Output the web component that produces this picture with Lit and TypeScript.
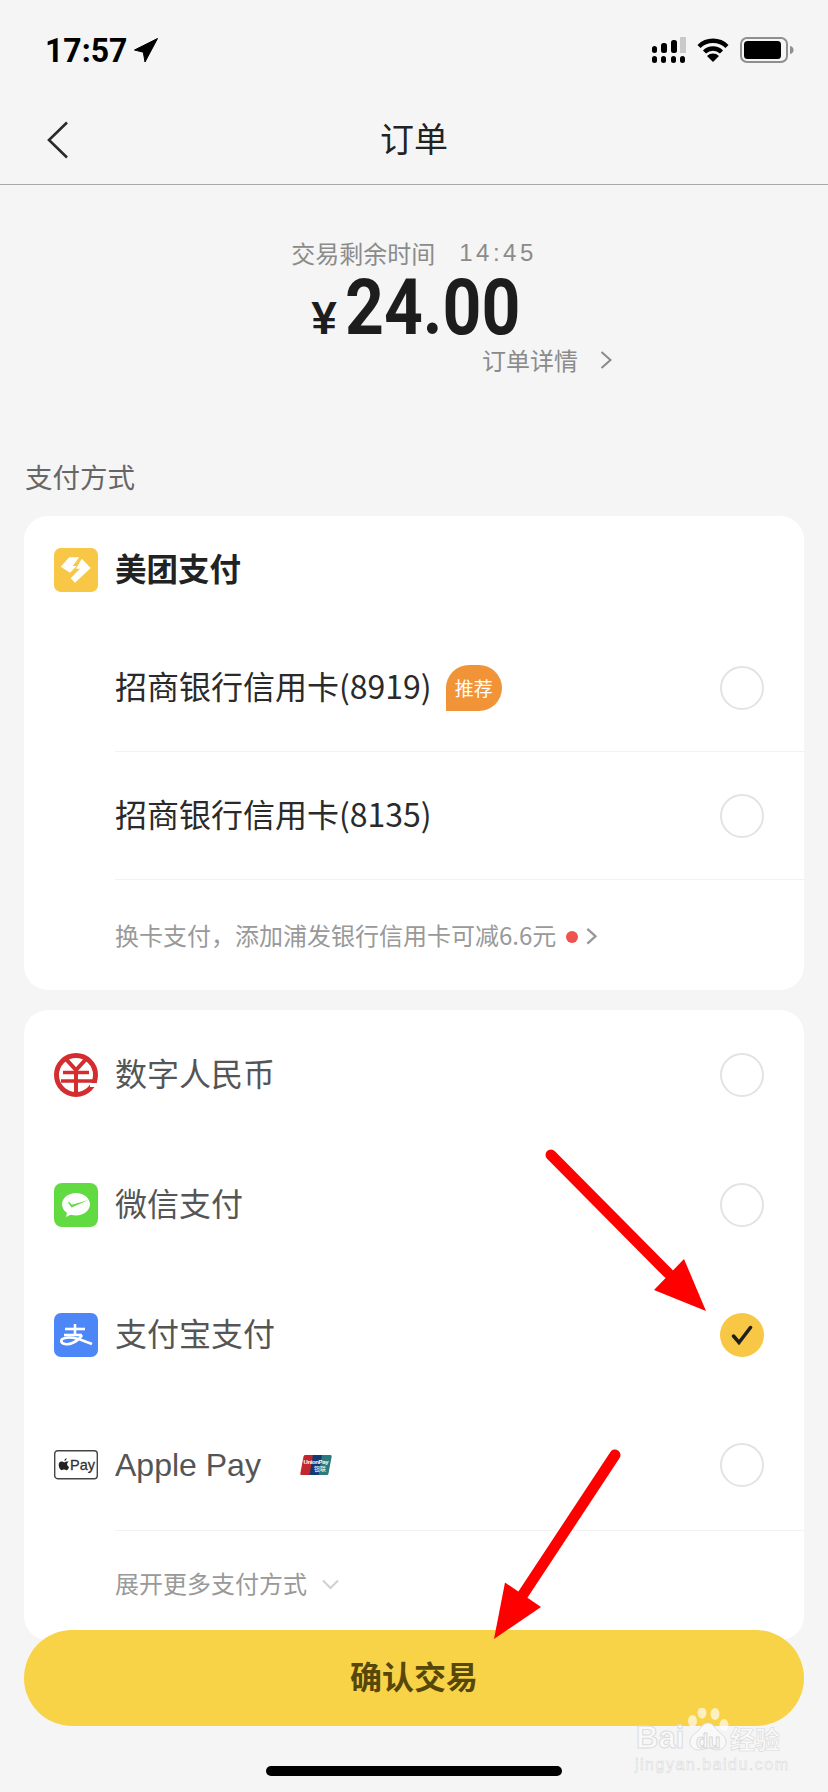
import { LitElement, html, css } from "lit";
import { customElement } from "lit/decorators.js";

const chevR = (c: string, w: number, sw = 2) => html`<svg class="chev" viewBox="0 0 12 18" style="width:${w}px" fill="none" stroke=${c} stroke-width=${sw}><path d="M1.5 1l9 8-9 8"/></svg>`;

@customElement("app-root")
export class AppRoot extends LitElement {
  static styles = css`
    :host { display: block; width: 828px; height: 1792px; position: relative; overflow: hidden; background: #f5f5f5;
      font-family: "Noto Sans CJK SC", "Liberation Sans", sans-serif; color: #222; }
    .status { height: 92px; display: flex; justify-content: space-between; align-items: center; padding: 8px 34px 0 45px; box-sizing: border-box; }
    .time { display: flex; align-items: center; gap: 8px; }
    .clock { display: block; width: 81px; font: 700 34px/40px "Roboto", sans-serif; color: #000; transform: scaleX(.94); transform-origin: left center; white-space: nowrap; }
    .status-right { display: flex; align-items: center; gap: 11px; }
    .nav { height: 92px; display: flex; align-items: center; justify-content: center; position: relative; border-bottom: 1px solid #a9a7a9; }
    .nav .title { font-size: 34px; line-height: 48px; color: #222; }
    .back { position: absolute; left: 47px; top: 29px; width: 22px; height: 38px; }
    .summary { display: flex; flex-direction: column; align-items: center; padding-top: 52px; height: 271px; box-sizing: border-box; }
    .remain { font-size: 24px; line-height: 32px; color: #8b8b8b; display: flex; gap: 24px; }
    .remain span:last-child { font-family: "Liberation Sans", sans-serif; letter-spacing: 3.5px; }
    .price { display: flex; align-items: baseline; line-height: 72px; height: 72px; font-family: "Roboto", sans-serif; font-weight: 700; color: #1d1d1d; gap: 8px; margin-top: 3px; }
    .price .yen { font-size: 46px; font-family: "Liberation Sans", sans-serif; }
    .price .num { font-size: 78px; width: 172px; transform: scaleX(.87); transform-origin: left center; white-space: nowrap; }
    .detail { align-self: flex-end; margin-right: 216px; display: flex; align-items: center; gap: 22px; font-size: 24px; line-height: 32px; color: #8b8b8b; }
    .section { font-size: 27.5px; line-height: 40px; color: #666; margin: 0 24px; padding: 0 0 20px 1px; }
    .card { margin: 0 24px; background: #fff; border-radius: 24px; overflow: hidden; }
    .card.one { height: 474px; }
    .card.two { height: 630px; margin-top: 20px; }
    .head { height: 108px; display: flex; align-items: center; padding-left: 30px; box-sizing: border-box; gap: 17px; font-size: 31.5px; font-weight: 700; color: #222; }
    .row { display: flex; align-items: center; padding-right: 40px; font-size: 32px; color: #2a2a2a; }
    .row.bank { height: 128px; margin-left: 91px; border-bottom: 1px solid #f2f2f2; box-sizing: border-box; }
    .row.pay { height: 130px; padding-left: 30px; gap: 17px; color: #555; }
    .lift { padding-bottom: 6px; }
    .radio { margin-left: auto; width: 44px; height: 44px; border: 2px solid #e3e3e3; border-radius: 50%; box-sizing: border-box; flex: none; display: flex; align-items: center; justify-content: center; }
    .radio.on { background: #f7c745; border: none; }
    .badge { margin-left: 14px; width: 56px; height: 46px; background: #f09437; color: #fff; border-radius: 23px 23px 23px 0; font-size: 19px; display: flex; align-items: center; justify-content: center; }
    .hint { height: 96px; margin-left: 91px; display: flex; align-items: center; font-size: 24px; color: #999; gap: 8px; padding-top: 17px; box-sizing: border-box; }
    .hint .lift, .more .lift { padding-bottom: 4px; }
    .dot { width: 12px; height: 12px; border-radius: 50%; background: #ef5350; margin-left: 2px; }
    .icon { width: 44px; height: 44px; flex: none; display: block; }
    .apple-icon { width: 44px; height: 30px; flex: none; display: block; }
    .latin { font-family: "Liberation Sans", sans-serif; }
    .union { width: 32px; height: 20px; margin-left: 22px; flex: none; display: block; }
    .more { margin-left: 91px; border-top: 1px solid #f2f2f2; height: 110px; display: flex; align-items: center; gap: 15px; font-size: 24px; color: #999; padding-bottom: 2px; box-sizing: border-box; }
    .cta { position: relative; margin: -10px 24px 0; height: 96px; border-radius: 48px; background: #f8d247; display: flex; align-items: center; justify-content: center; font-size: 32px; font-weight: 700; color: #574708; padding-bottom: 6px; box-sizing: border-box; }
    .indicator { width: 296px; height: 10px; border-radius: 5px; background: #000; margin: 40px auto 0; }
    .arrows { position: absolute; left: 0; top: 0; width: 828px; height: 1792px; pointer-events: none; }
    .wm { position: absolute; left: 634px; top: 1700px; width: 150px; height: 76px; }
    .wm .paw { position: absolute; left: 54px; top: 8px; width: 46px; height: 44px; }
    .wm .b { position: absolute; left: 2px; top: 21px; font: 700 31px/34px "Liberation Sans", sans-serif; color: #f9f9f9; -webkit-text-stroke: 1px #dcdcdc; }
    .wm .du { position: absolute; left: 62px; top: 29px; font: 700 20px/24px "Liberation Sans", sans-serif; color: #f9f9f9; -webkit-text-stroke: 1px #d8d8d8; }
    .wm .jy { position: absolute; left: 96px; top: 23px; font-size: 25px; line-height: 30px; font-weight: 700; color: #f9f9f9; -webkit-text-stroke: 0.6px #d8d8d8; white-space: nowrap; }
    .wm .url { position: absolute; left: 1px; top: 55px; font: 400 16px/20px "Liberation Sans", sans-serif; color: #f9f9f9; -webkit-text-stroke: 0.5px #d8d8d8; letter-spacing: 1.5px; white-space: nowrap; }
  `;

  render() {
    return html`
      <div class="status">
        <div class="time"><span class="clock">17:57</span>
          <svg width="24" height="24" viewBox="0 0 24 24"><path d="M23.500.5L.5 12l8.800 2.200L11 24z" fill="#000" stroke="#000" stroke-linejoin="round"/></svg>
        </div>
        <div class="status-right">
          <svg width="34" height="26" viewBox="0 0 34 26">
            <g fill="#000">
              <rect x="0" y="9" width="5" height="7" rx="2.500"/><rect x="9" y="6" width="6" height="10" rx="2.500"/><rect x="19" y="3" width="6" height="13" rx="2.500"/>
              <rect x="0" y="19" width="5" height="7" rx="2.500"/><rect x="9" y="19" width="5" height="7" rx="2.500"/><rect x="19" y="19" width="5" height="7" rx="2.500"/><rect x="28" y="19" width="5" height="7" rx="2.500"/>
            </g>
            <rect x="28" y="0" width="6" height="16" fill="#c9c9c9"/>
          </svg>
          <svg width="32" height="26" viewBox="0 0 32 26">
            <g fill="none" stroke="#000" stroke-width="4.400"><path d="M2 9.500a20 20 0 0 1 28 0"/><path d="M7.500 15a12 12 0 0 1 17 0"/></g>
            <path d="M16 25l-6-6a8.500 8.500 0 0 1 12 0z" fill="#000"/>
          </svg>
          <svg width="54" height="26" viewBox="0 0 54 26">
            <rect x="1" y="1" width="46" height="24" rx="6" fill="none" stroke="#8f8f8f" stroke-width="2"/>
            <rect x="4" y="4" width="37" height="18" rx="3.500" fill="#000"/>
            <path d="M50 9c2.500.6 3.500 2 3.500 4s-1 3.400-3.500 4z" fill="#8f8f8f"/>
          </svg>
        </div>
      </div>
      <div class="nav">
        <svg class="back" viewBox="0 0 22 38" fill="none" stroke="#2a2a2a" stroke-width="2.600"><path d="M20 1.500L2 19l18 17.500"/></svg>
        <div class="title">订单</div>
      </div>
      <div class="summary">
        <div class="remain"><span>交易剩余时间</span><span>14:45</span></div>
        <div class="price"><span class="yen">¥</span><span class="num">24.00</span></div>
        <div class="detail"><span>订单详情</span>${chevR("#8b8b8b", 12)}</div>
      </div>
      <div class="section">支付方式</div>
      <div class="card one">
        <div class="head">
          <svg class="icon" viewBox="0 0 44 44"><rect width="44" height="44" rx="7" fill="#f7c745"/>
            <path d="M6.700 18.700L15.300 9.300H25.300L18.700 18H22.700L16 24.700z" fill="#fff"/>
            <path d="M27.700 10.700L36.700 20L21 34.700L16.700 30.300L26 20.700H22z" fill="#fff"/>
          </svg>
          <span class="lift">美团支付</span>
        </div>
        <div class="row bank"><span class="lift">招商银行信用卡(8919)</span><span class="badge">推荐</span><span class="radio"></span></div>
        <div class="row bank"><span class="lift">招商银行信用卡(8135)</span><span class="radio"></span></div>
        <div class="hint"><span class="lift">换卡支付，添加浦发银行信用卡可减6.6元</span><span class="dot"></span>${chevR("#999", 11, 2.6)}</div>
      </div>
      <div class="card two">
        <div class="row pay">
          <svg class="icon" viewBox="0 0 44 44"><circle cx="22" cy="22" r="19.500" fill="#fff" stroke="#d42d2f" stroke-width="5"/>
            <g fill="none" stroke="#d42d2f">
              <path d="M11 5l11 12L33 5" stroke-width="4"/>
              <path d="M22 16v27" stroke-width="4"/>
              <path d="M9 19.500h26" stroke-width="3.500"/>
              <path d="M7 28h36" stroke-width="3.500"/>
            </g>
            <rect x="36" y="30" width="8" height="4" fill="#fff"/>
          </svg>
          <span class="lift">数字人民币</span><span class="radio"></span></div>
        <div class="row pay">
          <svg class="icon" viewBox="0 0 44 44"><rect width="44" height="44" rx="8" fill="#62da41"/>
            <path d="M22 10c-7.700 0-14 5-14 11.300 0 3.500 2 6.600 5 8.700l-1 4 4.600-2.300c1.700.5 3.500.8 5.400.8 7.700 0 14-5 14-11.200S29.700 10 22 10z" fill="#fff"/>
            <path d="M14 19.500l3.500 5 17-7.500-16.600 4.800-3-3z" fill="#62da41"/>
          </svg>
          <span class="lift">微信支付</span><span class="radio"></span></div>
        <div class="row pay">
          <svg class="icon" viewBox="0 0 44 44"><rect width="44" height="44" rx="7" fill="#4d86f7"/>
            <g fill="none" stroke="#fff" stroke-width="2.600">
              <path d="M11 16h20"/><path d="M21 11v11"/><path d="M10 22h18"/>
              <path d="M28 22C24 29 15 32 11 31C6 30 6 26 11 25C18 23 28 27 38 31"/>
            </g>
          </svg>
          <span class="lift">支付宝支付</span><span class="radio on">
            <svg width="22" height="20" viewBox="0 0 22 20" fill="none" stroke="#1f1f1f" stroke-width="3.500" stroke-linecap="round"><path d="M2.500 11l5.500 6.500L19.500 2.500"/></svg>
          </span></div>
        <div class="row pay">
          <svg class="apple-icon" viewBox="0 0 44 30"><rect x=".7" y=".7" width="42.600" height="28" rx="3" fill="#fff" stroke="#444" stroke-width="1.400"/>
            <path d="M10.500 11.500c-1.200 0-2 .8-3 .8s-1.500-.8-2.600-.7C3.300 11.700 2 13 2.200 15.500c.2 2.500 1.800 4.700 3 4.700.9 0 1.300-.6 2.300-.6s1.400.6 2.300.6c1.300 0 2.500-2 2.800-3.300-2.500-1-2.700-4.200-.1-5.400zM7.800 10.800c.1-1.300 1-2.300 2.300-2.600.1 1.400-1 2.600-2.300 2.600z" fill="#222" transform="translate(2.500 0)"/>
            <text x="16" y="20" font-family="Liberation Sans, sans-serif" font-size="14.500" fill="#333" stroke="#333" stroke-width=".3">Pay</text>
          </svg>
          <span class="latin">Apple Pay</span>
          <svg class="union" viewBox="0 0 32 20">
            <path d="M5 0h9L10.500 20H1.500Q0 20 .3 18.500L3.500 1.500Q3.800 0 5 0z" fill="#c1272d"/><path d="M13 0h10L19.500 20H9.500z" fill="#123a70"/><path d="M22 0h8.500Q32 0 31.700 1.500L28.500 18.500Q28.200 20 27 20H18.500z" fill="#2b7a80"/>
            <text x="3.500" y="8.500" font-family="Liberation Sans, sans-serif" font-size="6" font-weight="700" fill="#fff" textLength="25">UnionPay</text>
            <text x="14" y="16" font-family="Noto Sans CJK SC, sans-serif" font-size="6" fill="#fff" textLength="12">银联</text>
          </svg>
          <span class="radio"></span></div>
        <div class="more"><span class="lift">展开更多支付方式</span>
          <svg width="17" height="11" viewBox="0 0 17 11" fill="none" stroke="#d0d0d0" stroke-width="2"><path d="M1 1.500l7.500 7.500L16 1.500"/></svg>
        </div>
      </div>
      <div class="cta">确认交易</div>
      <div class="indicator"></div>
      <svg class="arrows" viewBox="0 0 828 1792">
        <g fill="#ff0000">
          <path d="M551 1155L668 1273" stroke="#f00" stroke-width="11" stroke-linecap="round"/>
          <path d="M706 1311L684 1259L654 1290z"/>
          <path d="M615 1455L522 1596" stroke="#f00" stroke-width="11" stroke-linecap="round"/>
          <path d="M494 1639L505 1582.500L541 1607z"/>
        </g>
      </svg>
      <div class="wm">
        <svg class="paw" viewBox="0 0 46 44">
          <g fill="#fff" fill-opacity=".65">
            <ellipse cx="4.500" cy="13" rx="4.500" ry="6"/><ellipse cx="14" cy="5" rx="4.500" ry="5.500"/><ellipse cx="27" cy="6" rx="4.500" ry="6"/><ellipse cx="36" cy="17" rx="4.500" ry="6"/>
          </g>
          <path d="M20 15c-5 0-7 5-10 8-3 3-8 5-8 11 0 5 4 8 9 8 4 0 6-2 9-2s5 2 9 2c5 0 9-3 9-8 0-6-5-8-8-11-3-3-5-8-10-8z" fill="#f9f9f9" stroke="#dcdcdc" stroke-width="1"/>
        </svg>
        <span class="b">Bai</span><span class="du">du</span><span class="jy">经验</span>
        <span class="url">jingyan.baidu.com</span>
      </div>
    `;
  }
}
